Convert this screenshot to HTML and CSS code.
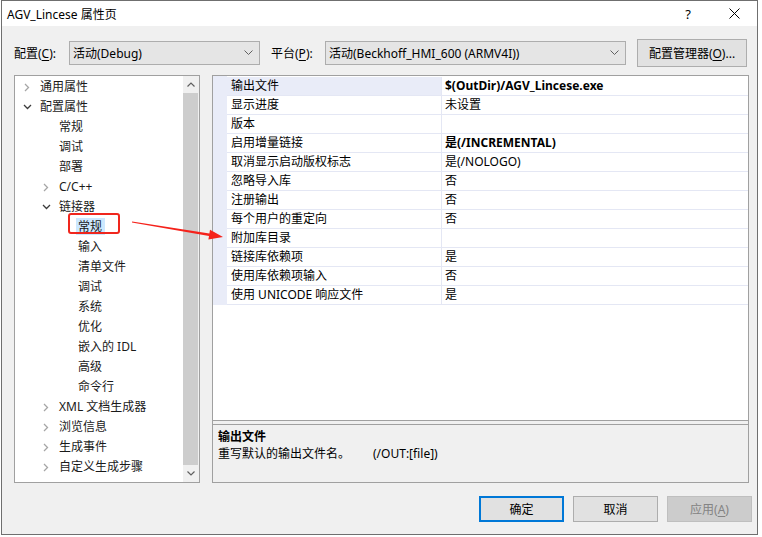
FILE: index.html
```html
<!DOCTYPE html>
<html lang="zh-CN">
<head>
    <meta charset="UTF-8">
    <title>AGV_Lincese 属性页</title>
    <link rel="stylesheet" href="styles.css">
</head>
<body>
    <div class="window">
        <div class="titlebar">
            <span class="title">AGV_Lincese 属性页</span>
            <span class="title-btn">?</span>
            <span class="title-btn">
                <svg width="11" height="11" viewBox="0 0 11 11"><path d="M0.5 0.5 L10.5 10.5 M10.5 0.5 L0.5 10.5" stroke="#000" stroke-width="1"/></svg>
            </span>
        </div>

        <div class="main">
            <div class="toolbar">
                <span class="lbl">配置(<u>C</u>):</span>
                <div class="combo combo-config">
                    <span>活动(Debug)</span>
                    <svg class="combo-arrow" width="9" height="6" viewBox="0 0 9 6"><polyline points="0.5,0.5 4.5,4.5 8.5,0.5" fill="none" stroke="#606060"/></svg>
                </div>
                <span class="lbl lbl-platform">平台(<u>P</u>):</span>
                <div class="combo combo-platform">
                    <span>活动(Beckhoff_HMI_600 (ARMV4I))</span>
                    <svg class="combo-arrow" width="9" height="6" viewBox="0 0 9 6"><polyline points="0.5,0.5 4.5,4.5 8.5,0.5" fill="none" stroke="#606060"/></svg>
                </div>
                <button class="btn btn-manager">配置管理器(<u>O</u>)...</button>
            </div>

            <div class="panes">
                <div class="tree">
                    <ul class="tree-list">
                        <li class="item lv0"><svg class="chev closed" width="6" height="9" viewBox="0 0 6 9"><polyline points="1,1 4.5,4.5 1,8" fill="none" stroke="#a6a6a6" stroke-width="1.3"/></svg>通用属性</li>
                        <li class="item lv0"><svg class="chev open" width="9" height="6" viewBox="0 0 9 6"><polyline points="1,1 4.5,4.5 8,1" fill="none" stroke="#3c3c3c" stroke-width="1.3"/></svg>配置属性</li>
                        <li class="item lv1">常规</li>
                        <li class="item lv1">调试</li>
                        <li class="item lv1">部署</li>
                        <li class="item lv1"><svg class="chev closed" width="6" height="9" viewBox="0 0 6 9"><polyline points="1,1 4.5,4.5 1,8" fill="none" stroke="#a6a6a6" stroke-width="1.3"/></svg>C/C++</li>
                        <li class="item lv1"><svg class="chev open" width="9" height="6" viewBox="0 0 9 6"><polyline points="1,1 4.5,4.5 8,1" fill="none" stroke="#3c3c3c" stroke-width="1.3"/></svg>链接器</li>
                        <li class="item lv2"><span class="item-current">常规</span></li>
                        <li class="item lv2">输入</li>
                        <li class="item lv2">清单文件</li>
                        <li class="item lv2">调试</li>
                        <li class="item lv2">系统</li>
                        <li class="item lv2">优化</li>
                        <li class="item lv2">嵌入的 IDL</li>
                        <li class="item lv2">高级</li>
                        <li class="item lv2">命令行</li>
                        <li class="item lv1"><svg class="chev closed" width="6" height="9" viewBox="0 0 6 9"><polyline points="1,1 4.5,4.5 1,8" fill="none" stroke="#a6a6a6" stroke-width="1.3"/></svg>XML 文档生成器</li>
                        <li class="item lv1"><svg class="chev closed" width="6" height="9" viewBox="0 0 6 9"><polyline points="1,1 4.5,4.5 1,8" fill="none" stroke="#a6a6a6" stroke-width="1.3"/></svg>浏览信息</li>
                        <li class="item lv1"><svg class="chev closed" width="6" height="9" viewBox="0 0 6 9"><polyline points="1,1 4.5,4.5 1,8" fill="none" stroke="#a6a6a6" stroke-width="1.3"/></svg>生成事件</li>
                        <li class="item lv1"><svg class="chev closed" width="6" height="9" viewBox="0 0 6 9"><polyline points="1,1 4.5,4.5 1,8" fill="none" stroke="#a6a6a6" stroke-width="1.3"/></svg>自定义生成步骤</li>
                    </ul>
                    <div class="vscroll">
                        <div class="vscroll-btn">
                            <svg width="8" height="5" viewBox="0 0 8 5"><polyline points="0.5,4.5 4,1 7.5,4.5" fill="none" stroke="#606060" stroke-width="1.2"/></svg>
                        </div>
                        <div class="vscroll-thumb"></div>
                        <div class="vscroll-btn">
                            <svg width="8" height="5" viewBox="0 0 8 5"><polyline points="0.5,0.5 4,4 7.5,0.5" fill="none" stroke="#606060" stroke-width="1.2"/></svg>
                        </div>
                    </div>
                </div>

                <div class="props">
                    <div class="grid">
                        <div class="gutter"></div>
                        <div class="rows">
                            <div class="row row-active"><div class="cell-name">输出文件</div><div class="cell-value bold">$(OutDir)/AGV_Lincese.exe</div></div>
                            <div class="row"><div class="cell-name">显示进度</div><div class="cell-value">未设置</div></div>
                            <div class="row"><div class="cell-name">版本</div><div class="cell-value"></div></div>
                            <div class="row"><div class="cell-name">启用增量链接</div><div class="cell-value bold">是(/INCREMENTAL)</div></div>
                            <div class="row"><div class="cell-name">取消显示启动版权标志</div><div class="cell-value">是(/NOLOGO)</div></div>
                            <div class="row"><div class="cell-name">忽略导入库</div><div class="cell-value">否</div></div>
                            <div class="row"><div class="cell-name">注册输出</div><div class="cell-value">否</div></div>
                            <div class="row"><div class="cell-name">每个用户的重定向</div><div class="cell-value">否</div></div>
                            <div class="row"><div class="cell-name">附加库目录</div><div class="cell-value"></div></div>
                            <div class="row"><div class="cell-name">链接库依赖项</div><div class="cell-value">是</div></div>
                            <div class="row"><div class="cell-name">使用库依赖项输入</div><div class="cell-value">否</div></div>
                            <div class="row"><div class="cell-name">使用 UNICODE 响应文件</div><div class="cell-value">是</div></div>
                        </div>
                    </div>
                    <div class="split"></div>
                    <div class="desc">
                        <div class="desc-title">输出文件</div>
                        <div class="desc-text">重写默认的输出文件名。<span class="desc-switch">(/OUT:[file])</span></div>
                    </div>
                </div>
            </div>

            <div class="buttons">
                <button class="btn btn-dialog btn-default">确定</button>
                <button class="btn btn-dialog">取消</button>
                <button class="btn btn-dialog btn-disabled">应用(<u>A</u>)</button>
            </div>
        </div>
    </div>

    <!-- annotation drawn over the screenshot -->
    <div class="callout-box"></div>
    <svg class="callout-arrow" width="100" height="30" viewBox="0 0 100 30">
        <polygon points="4.1,6.4 81.4,18.4 82,14.8 95,22 80.4,24.6 81,21 3.9,7.6" fill="#f5221b"/>
    </svg>
</body>
</html>
```

FILE: styles.css
```css
body {
    margin: 0;
    background: #ffffff;
    font-family: "Noto Sans", "Noto Sans CJK SC", sans-serif;
    font-size: 12px;
    color: #000;
    position: relative;
    height: 537px;
    overflow: hidden;
}
u {
    text-decoration: underline;
    text-underline-offset: 2px;
}
.window {
    margin-left: 1px;
    width: 757px;
    height: 535px;
    box-sizing: border-box;
    border: 1px solid #6f6f6f;
    background: #f0f0f0;
    display: flex;
    flex-direction: column;
}
.titlebar {
    height: 25px;
    background: #ffffff;
    display: flex;
    align-items: center;
    padding-left: 5px;
    flex-shrink: 0;
}
.title {
    flex: 1;
}
.title-btn {
    width: 46px;
    height: 25px;
    display: flex;
    align-items: center;
    justify-content: center;
    font-size: 13px;
}
.main {
    flex: 1;
    padding: 13px 5px 0 12px;
    display: flex;
    flex-direction: column;
}
.toolbar {
    display: flex;
    align-items: center;
    height: 28px;
}
.lbl {
    width: 55px;
    flex-shrink: 0;
}
.lbl-platform {
    margin-left: 11px;
    width: 54px;
}
.combo {
    height: 24px;
    box-sizing: border-box;
    border: 1px solid #adadad;
    background: #e5e5e5;
    display: flex;
    align-items: center;
    padding-left: 3px;
}
.combo-arrow {
    margin-left: auto;
    margin-right: 6px;
}
.combo-config {
    width: 191px;
}
.combo-platform {
    width: 301px;
}
.btn {
    font-family: inherit;
    font-size: 12px;
    color: #000;
    background: #e1e1e1;
    border: 1px solid #adadad;
    box-sizing: border-box;
    padding: 0;
}
.btn-manager {
    margin-left: 11px;
    width: 110px;
    height: 28px;
}
.panes {
    display: flex;
    margin-top: 8px;
    height: 408px;
}
.tree {
    width: 186px;
    box-sizing: border-box;
    border: 1px solid #a0a0a0;
    background: #fff;
    display: flex;
}
.tree-list {
    flex: 1;
    list-style: none;
    margin: 0;
    padding: 1px 0 0;
}
.item {
    height: 20px;
    line-height: 20px;
    position: relative;
    white-space: nowrap;
    color: #1a1a1a;
}
.lv0 { padding-left: 25px; }
.lv1 { padding-left: 44px; }
.lv2 { padding-left: 63px; }
.chev {
    position: absolute;
}
.lv0 .chev.closed { left: 9px; top: 6px; }
.lv0 .chev.open { left: 8px; top: 7px; }
.lv1 .chev.closed { left: 28px; top: 6px; }
.lv1 .chev.open { left: 27px; top: 7px; }
.item-current {
    display: inline-block;
    background: #cce8ff;
    padding: 0 3px 0 2px;
    margin-left: -2px;
    line-height: 17px;
}
.vscroll {
    width: 16px;
    background: #f0f0f0;
    display: flex;
    flex-direction: column;
}
.vscroll-btn {
    height: 17px;
    display: flex;
    align-items: center;
    justify-content: center;
}
.vscroll-thumb {
    flex: 1;
    background: #cdcdcd;
    margin-right: 1px;
}
.props {
    margin-left: 12px;
    width: 537px;
    box-sizing: border-box;
    border: 1px solid #a0a0a0;
    display: flex;
    flex-direction: column;
}
.grid {
    height: 345px;
    box-sizing: border-box;
    background: #fff;
    border-bottom: 1px solid #a0a0a0;
    display: flex;
    align-items: flex-start;
}
.gutter {
    width: 14px;
    height: 229px;
    background: #e9ecf8;
}
.rows {
    flex: 1;
}
.row {
    display: flex;
    height: 19px;
    box-sizing: border-box;
    border-bottom: 1px solid #e4e7f4;
    line-height: 18px;
}
.row:first-child {
    height: 20px;
    padding-top: 1px;
}
.cell-name {
    width: 215px;
    box-sizing: border-box;
    padding-left: 4px;
    border-right: 1px solid #e4e7f4;
    white-space: nowrap;
}
.row-active .cell-name {
    background: #e9ecf8;
}
.cell-value {
    flex: 1;
    padding-left: 3px;
    white-space: nowrap;
}
.bold {
    font-weight: bold;
}
.split {
    height: 3px;
}
.desc {
    flex: 1;
    border-top: 1px solid #a0a0a0;
    padding: 3px 0 0 5px;
    line-height: 17px;
}
.desc-title {
    font-weight: bold;
}
.desc-switch {
    margin-left: 23px;
}
.buttons {
    display: flex;
    justify-content: flex-end;
    gap: 9px;
    margin-top: 13px;
}
.btn-dialog {
    width: 85px;
    height: 26px;
}
.btn-default {
    border: 2px solid #0078d7;
}
.btn-disabled {
    background: #cccccc;
    border-color: #bfbfbf;
    color: #838383;
}
.callout-box {
    position: absolute;
    left: 68px;
    top: 213px;
    width: 52px;
    height: 21px;
    box-sizing: border-box;
    border: 2px solid #f0261d;
    border-radius: 3px;
}
.callout-arrow {
    position: absolute;
    left: 128px;
    top: 215px;
}
```
